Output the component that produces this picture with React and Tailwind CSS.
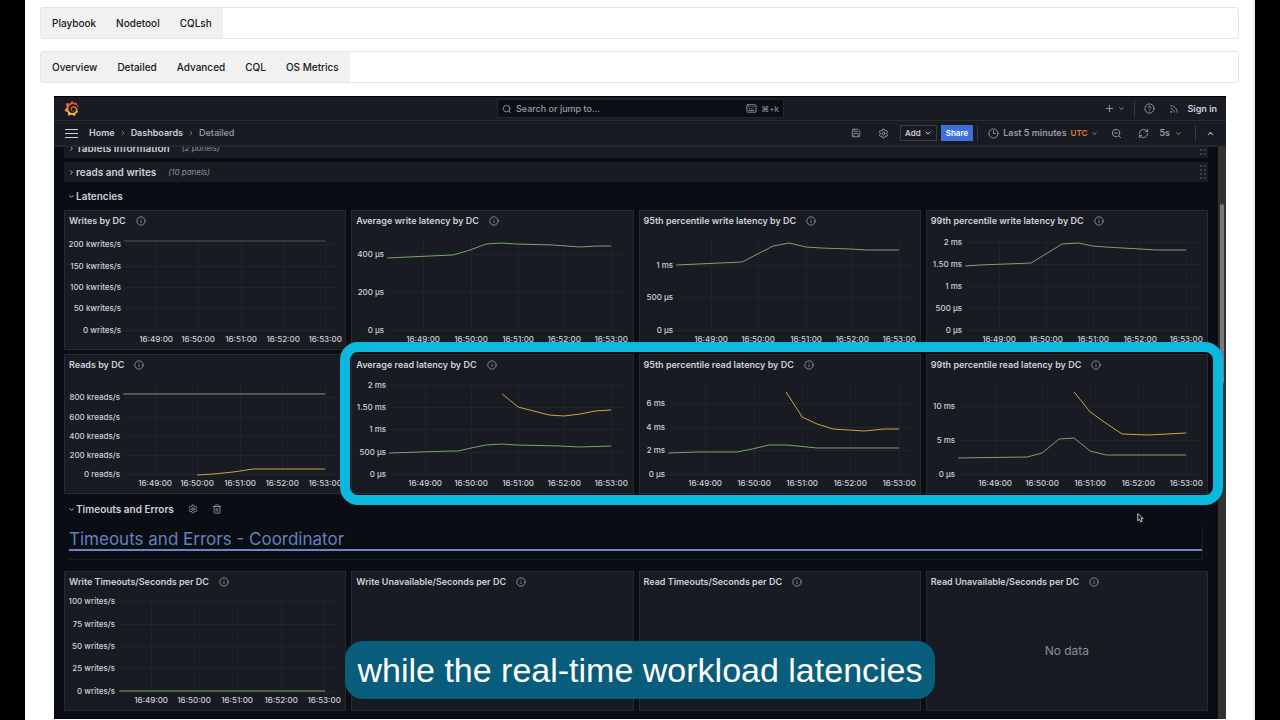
import React from "react";
import {
  ChevronDown,
  ChevronRight,
  ChevronUp,
  CircleHelp,
  Clock3,
  Info,
  Keyboard,
  Plus,
  RefreshCw,
  Rss,
  Save,
  Search,
  Settings,
  Trash2,
  ZoomOut,
} from "lucide-react";
import { SiGrafana } from "react-icons/si";

const GREEN = "#73a76c";
const YELLOW = "#c9a544";

// Chart coordinates are in the 280 x 118 drawing area below a panel title
const writePanels = [
  {
    title: "Writes by DC",
    edge: 56,
    labels: [["200 kwrites/s", 13], ["150 kwrites/s", 35], ["100 kwrites/s", 56], ["50 kwrites/s", 77], ["0 writes/s", 99]],
    times: [91, 133, 176, 218, 260],
    series: [{ color: "#4f6048", points: "59,10 260,10" }],
  },
  {
    title: "Average write latency by DC",
    edge: 32,
    labels: [["400 µs", 23], ["200 µs", 61], ["0 µs", 99]],
    times: [71, 119, 166, 212, 259],
    series: [{ color: GREEN, points: "35,27 78,25 101,24 118,19 134,13 149,12 164,13 201,14 228,16 244,15 259,15" }],
  },
  {
    title: "95th percentile write latency by DC",
    edge: 33,
    labels: [["1 ms", 34], ["500 µs", 66], ["0 µs", 99]],
    times: [71, 118, 166, 212, 259],
    series: [{ color: GREEN, points: "36,34 102,31 133,15 149,12 166,16 181,17 210,18 227,19 244,19 259,19" }],
  },
  {
    title: "99th percentile write latency by DC",
    edge: 35,
    labels: [["2 ms", 11], ["1.50 ms", 33], ["1 ms", 55], ["500 µs", 77], ["0 µs", 99]],
    times: [72, 119, 166, 213, 259],
    series: [{ color: GREEN, points: "38,35 53,34 104,32 135,13 151,12 166,15 178,16 213,18 229,19 259,19" }],
  },
];

const readPanels = [
  {
    title: "Reads by DC",
    edge: 55,
    labels: [["800 kreads/s", 22], ["600 kreads/s", 42], ["400 kreads/s", 61], ["200 kreads/s", 80], ["0 reads/s", 99]],
    times: [90, 132, 175, 217, 260],
    series: [
      { color: GREEN, points: "58,19 260,19" },
      { color: YELLOW, points: "132,100 148,99 168,97 188,94 195,94 260,94" },
    ],
  },
  {
    title: "Average read latency by DC",
    edge: 34,
    labels: [["2 ms", 10], ["1.50 ms", 32], ["1 ms", 54], ["500 µs", 77], ["0 µs", 99]],
    times: [73, 119, 166, 212, 259],
    series: [
      { color: GREEN, points: "37,78 98,76 106,76 119,73 134,70 150,69 164,70 208,71 228,72 259,71" },
      { color: YELLOW, points: "150,19 166,32 197,40 212,41 228,39 243,36 259,35" },
    ],
  },
  {
    title: "95th percentile read latency by DC",
    edge: 25,
    labels: [["6 ms", 28], ["4 ms", 52], ["2 ms", 75], ["0 µs", 99]],
    times: [65, 114, 162, 210, 259],
    series: [
      { color: GREEN, points: "28,78 57,77 97,77 112,74 129,70 147,70 177,73 200,73 210,73 259,73" },
      { color: YELLOW, points: "146,17 162,42 177,49 193,54 224,56 244,54 259,54" },
    ],
  },
  {
    title: "99th percentile read latency by DC",
    edge: 28,
    labels: [["10 ms", 31], ["5 ms", 65], ["0 µs", 99]],
    times: [68, 115, 163, 211, 259],
    series: [
      { color: GREEN, points: "31,83 100,82 115,78 132,64 147,63 163,76 179,80 259,80" },
      { color: YELLOW, points: "147,17 163,37 180,49 195,59 221,60 259,58" },
    ],
  },
];

const timeoutPanels = [
  {
    title: "Write Timeouts/Seconds per DC",
    edge: 50,
    labels: [["100 writes/s", 9], ["75 writes/s", 32], ["50 writes/s", 54], ["25 writes/s", 76], ["0 writes/s", 99]],
    times: [86, 129, 172, 216, 259],
    series: [{ color: GREEN, points: "54,99 260,99" }],
  },
  { title: "Write Unavailable/Seconds per DC" },
  { title: "Read Timeouts/Seconds per DC" },
  { title: "Read Unavailable/Seconds per DC", message: "No data" },
];

const hours = ["16:49:00", "16:50:00", "16:51:00", "16:52:00", "16:53:00"];

const Chart = ({ title, edge, labels, times, series }) => (
  <svg viewBox="0 0 280 118" className="block w-full" role="img" aria-label={title}>
    <g stroke="#22252b" strokeWidth="1">
      {labels.map(([text, y]) => (
        <line key={text} x1={edge + 5} x2="271" y1={y + 0.5} y2={y + 0.5} />
      ))}
      {times.map((x) => (
        <line key={x} x1={x + 0.5} x2={x + 0.5} y1="9" y2="102" />
      ))}
    </g>
    <g className="fill-[#d0d1d7] text-[8px] font-medium">
      {labels.map(([text, y]) => (
        <text key={text} x={edge} y={y + 3} textAnchor="end">{text}</text>
      ))}
      {times.map((x, i) => (
        <text key={x} x={x} y="111" textAnchor="middle">{hours[i]}</text>
      ))}
    </g>
    {series.map((s) => (
      <polyline key={s.color} points={s.points} fill="none" stroke={s.color} strokeWidth="1" strokeLinejoin="round" />
    ))}
  </svg>
);

const Panel = (props) => (
  <section className="flex h-[140px] flex-col overflow-hidden border border-[#272a31] bg-[#181b22]">
    <h2 className="flex h-5 shrink-0 items-center gap-[10px] pl-1 text-[9px] font-semibold whitespace-nowrap text-[#cfd0d8]">
      {props.title}
      <Info className="size-[10px] text-[#9a9ba3]" />
    </h2>
    {props.series && <Chart {...props} />}
    {props.message && (
      <p className="flex flex-1 items-center justify-center text-[12px] text-[#8d8e95]">{props.message}</p>
    )}
  </section>
);

const PanelRow = ({ panels, children }) => (
  <div className="relative grid grid-cols-4 gap-[5px]">
    {panels.map((p) => (
      <Panel key={p.title} {...p} />
    ))}
    {children}
  </div>
);

const Grip = () => (
  <svg width="6" height="14" viewBox="0 0 6 14" fill="#3c3e45" aria-hidden="true">
    {[0, 4, 8, 12].map((y) => (
      <React.Fragment key={y}>
        <rect x="0" y={y} width="2" height="2" />
        <rect x="4" y={y} width="2" height="2" />
      </React.Fragment>
    ))}
  </svg>
);

const ClosedRow = ({ title, count }) => (
  <div className="flex h-5 shrink-0 items-center bg-[#181b22] pr-[2px] pl-1">
    <button className="flex items-center gap-[1px] text-[10px] font-semibold text-[#cfd0d8]">
      <ChevronRight className="size-[7px]" strokeWidth={3} />
      {title}
    </button>
    <span className="ml-3 flex-1 text-[8px] text-[#8f9097] italic">({count} panels)</span>
    <Grip />
  </div>
);

const OpenRow = ({ title, children }) => (
  <div className="flex h-5 items-center gap-[14px] pl-1">
    <button className="flex items-center gap-[1px] text-[10px] font-semibold text-[#cfd0d8]">
      <ChevronDown className="size-[7px]" strokeWidth={3} />
      {title}
    </button>
    {children}
  </div>
);

const Tabs = ({ items }) => (
  <nav className="flex h-8 overflow-hidden rounded-[3px] border border-[#e4e4e4]">
    <div className="flex bg-[#f1f1f1] px-px">
      {items.map((item) => (
        <a key={item} href="#" className="flex items-center px-[10px] text-[10px] font-medium text-[#161616]">{item}</a>
      ))}
    </div>
  </nav>
);

const Logo = () => (
  <>
    <svg className="absolute size-0" aria-hidden="true">
      <linearGradient id="flame" x1="0" y1="0" x2="0" y2="1">
        <stop offset="0" stopColor="#e2472b" />
        <stop offset="1" stopColor="#f9c53e" />
      </linearGradient>
    </svg>
    <SiGrafana fill="url(#flame)" className="size-[15px]" />
  </>
);

const TopBar = () => (
  <header className="flex h-6 items-center border-b border-[#2b2d34] pr-[2px] pl-[10px]">
    <div className="flex flex-1 items-center">
      <a href="#" aria-label="Home page"><Logo /></a>
    </div>
    <label className="flex h-[19px] w-[287px] items-center gap-1 border border-[#24262d] bg-[#0c0e15] px-1 text-[#9a9ba3]">
      <Search className="size-[10px] shrink-0" />
      <input
        aria-label="Search"
        placeholder="Search or jump to..."
        className="min-w-0 flex-1 bg-transparent text-[9px] font-medium outline-none placeholder:text-[#9a9ba3]"
      />
      <Keyboard className="size-[11px] shrink-0" />
      <span className="text-[8px]">⌘+k</span>
    </label>
    <div className="flex flex-1 items-center justify-end pr-[7px] text-[#9a9ba3]">
      <button aria-label="New" className="flex items-center gap-[3px]">
        <Plus className="size-[11px]" />
        <ChevronDown className="size-[7px]" strokeWidth={3} />
      </button>
      <span className="mx-[9px] h-4 w-px bg-[#3a3c43]" />
      <button aria-label="Help"><CircleHelp className="size-[11px]" /></button>
      <button aria-label="News" className="mr-[9px] ml-[14px]"><Rss className="size-[10px]" /></button>
      <a href="#" className="text-[9px] font-semibold text-[#cfd0d8]">Sign in</a>
    </div>
  </header>
);

const ToolBar = () => (
  <div className="flex h-[26px] items-center border-b-2 border-[#25272e] px-[11px] text-[9px] font-semibold text-[#9a9ba3]">
    <button aria-label="Menu">
      <svg width="13" height="9" viewBox="0 0 13 9" fill="#cfd0d8" aria-hidden="true">
        <rect width="13" height="1" />
        <rect y="4" width="13" height="1" />
        <rect y="8" width="13" height="1" />
      </svg>
    </button>
    <nav aria-label="Breadcrumb" className="ml-[11px] flex flex-1 items-center gap-1">
      <a href="#" className="text-[#cfd0d8]">Home</a>
      <ChevronRight className="size-[8px]" />
      <a href="#" className="text-[#cfd0d8]">Dashboards</a>
      <ChevronRight className="size-[8px]" />
      <span className="font-medium">Detailed</span>
    </nav>
    <button aria-label="Save"><Save className="size-[10px]" /></button>
    <button aria-label="Settings" className="mr-[11px] ml-[17px]"><Settings className="size-[11px]" /></button>
    <button className="flex h-4 items-center gap-[3px] border border-[#3a3c43] px-1 text-[8px] text-[#cfd0d8]">
      Add
      <ChevronDown className="size-[8px]" strokeWidth={3} />
    </button>
    <button className="ml-[4px] h-4 bg-[#3d71d9] px-[5px] text-[8px] text-white">Share</button>
    <span className="ml-[4px] h-4 w-px bg-[#3a3c43]" />
    <button className="ml-[10px] flex items-center gap-1">
      <Clock3 className="size-[11px]" />
      Last 5 minutes
      <span className="text-[8px] text-[#e0802c]">UTC</span>
      <ChevronDown className="size-[7px]" strokeWidth={3} />
    </button>
    <button aria-label="Zoom out" className="mr-4 ml-[13px]"><ZoomOut className="size-[11px]" /></button>
    <button aria-label="Refresh"><RefreshCw className="size-[11px]" /></button>
    <button className="ml-[10px] flex items-center gap-[5px]">
      5s
      <ChevronDown className="size-[7px]" strokeWidth={3} />
    </button>
    <span className="mr-[10px] ml-[13px] h-4 w-px bg-[#3a3c43]" />
    <button aria-label="Collapse"><ChevronUp className="size-[9px]" strokeWidth={3} /></button>
  </div>
);

const Dashboard = () => (
  <main className="mt-[13px] mr-[13px] ml-[14px] flex min-h-0 flex-1 flex-col border-t border-black bg-[#181b22]">
    <TopBar />
    <ToolBar />
    <div className="flex min-h-0 flex-1 bg-[#0b0d15]">
      <div className="min-w-0 flex-1 px-[10px]">
        <div className="flex h-[11px] flex-col justify-end overflow-hidden">
          <ClosedRow title="Tablets Information" count={2} />
        </div>
        <div className="mt-1">
          <ClosedRow title="reads and writes" count={10} />
        </div>
        <div className="mt-1 mb-1">
          <OpenRow title="Latencies" />
        </div>
        <div className="flex flex-col gap-1">
          <PanelRow panels={writePanels} />
          <PanelRow panels={readPanels}>
            <div className="absolute -top-3 -right-[15px] -bottom-[11px] left-[calc(25%-10px)] z-10 rounded-[18px] border-[10px] border-[#0bb8de]" />
          </PanelRow>
        </div>
        <div className="mt-[5px]">
          <OpenRow title="Timeouts and Errors">
            <button aria-label="Row settings"><Settings className="size-[10px] text-[#9a9ba3]" /></button>
            <button aria-label="Delete row"><Trash2 className="size-[10px] text-[#9a9ba3]" /></button>
          </OpenRow>
        </div>
        <div className="mx-[5px] mt-2 mb-[11px] h-[33px] border-r border-b border-[#1c1e26]">
          <h1 className="border-b-2 border-[#6e87c4] pt-[3px] text-[17px] leading-[19px] text-[#6580bd]">
            Timeouts and Errors - Coordinator
          </h1>
        </div>
        <PanelRow panels={timeoutPanels} />
      </div>
      <div className="w-2 bg-[#323232] pt-[57px]">
        <div className="mx-auto h-[180px] w-1 rounded bg-[#7a7a7a]" />
      </div>
    </div>
  </main>
);

export default function App() {
  return (
    <div className="h-screen overflow-hidden bg-black px-[25px] font-['Inter',sans-serif]">
      <div className="relative flex h-full flex-col border-r-2 border-[#ececec] bg-white pt-[7px] pr-[14px] pb-px pl-[15px]">
        <div className="flex flex-col gap-3">
          <Tabs items={["Playbook", "Nodetool", "CQLsh"]} />
          <Tabs items={["Overview", "Detailed", "Advanced", "CQL", "OS Metrics"]} />
        </div>
        <Dashboard />
        <svg viewBox="0 0 12 18" className="absolute top-[513px] left-[1112px] z-20 h-[10px] w-[7px]" aria-hidden="true">
          <path d="M1 1v13l3-3 2 5 3-1-2-5h4z" fill="#111" stroke="#ddd" strokeWidth="1.5" />
        </svg>
      </div>
      <div className="pointer-events-none fixed inset-x-0 bottom-[21px] z-30 flex justify-center">
        <p className="rounded-[18px] bg-[#085c7c] px-3 text-[34px] leading-[58px] whitespace-nowrap text-white font-['Liberation_Sans',Arial,sans-serif]">
          while the real-time workload latencies
        </p>
      </div>
    </div>
  );
}
